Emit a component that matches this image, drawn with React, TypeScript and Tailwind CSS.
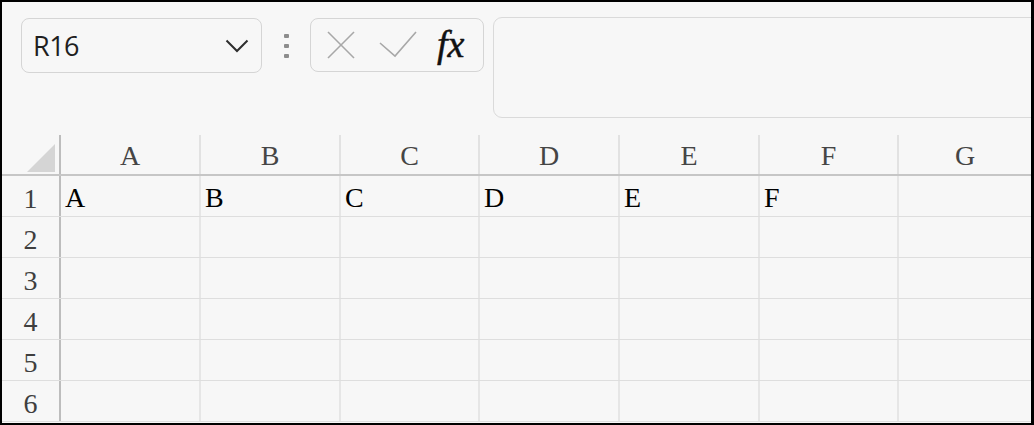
import React from "react";

const cols = [
  { l: "A", w: "w-[140px]", v: "A" },
  { l: "B", w: "w-[140px]", v: "B" },
  { l: "C", w: "w-[139px]", v: "C" },
  { l: "D", w: "w-[140px]", v: "D" },
  { l: "E", w: "w-[140px]", v: "E" },
  { l: "F", w: "w-[139px]", v: "F" },
  { l: "G", w: "flex-1", v: "" },
];

const serif = { fontFamily: '"Liberation Serif", "Times New Roman", serif' };

export default function App() {
  return (
    <div className="w-[1034px] h-[425px] box-border border-2 border-r-[3px] border-black bg-[#f7f7f7] overflow-hidden flex flex-col">
      {/* Toolbar */}
      <div className="h-[133px] shrink-0 flex items-start pl-[19px] pt-[15px]">
        <div
          className="mt-[1px] w-[241px] h-[55px] shrink-0 rounded-[8px] border border-[#d5d5d5] flex items-center justify-between pl-[11px] pr-[12px]"
          style={{ fontFamily: '"Open Sans", "Noto Sans", sans-serif' }}
        >
          <span className="text-[27px] text-[#1f1f1f] leading-none tracking-[-0.5px]">R16</span>
          <svg width="24" height="14" viewBox="0 0 24 14" className="mt-[1px]">
            <polyline points="1.5,1.5 12,12 22.5,1.5" fill="none" stroke="#2e2e2e" strokeWidth="2" />
          </svg>
        </div>
        <div className="w-[48px] h-[56px] shrink-0 flex flex-col items-center justify-center gap-[6px] pt-[1px]">
          <div className="w-[5px] h-[4px] bg-[#8d8d8d] rounded-[1px]" />
          <div className="w-[5px] h-[4px] bg-[#8d8d8d] rounded-[1px]" />
          <div className="w-[5px] h-[4px] bg-[#8d8d8d] rounded-[1px]" />
        </div>
        <div className="mt-[1px] w-[174px] h-[54px] shrink-0 rounded-[8px] border border-[#d5d5d5] flex items-center pl-[16px]">
          <svg width="28" height="28" viewBox="0 0 28 28">
            <line x1="1" y1="1" x2="27" y2="27" stroke="#a8a8a8" strokeWidth="1.6" />
            <line x1="27" y1="1" x2="1" y2="27" stroke="#a8a8a8" strokeWidth="1.6" />
          </svg>
          <svg width="38" height="28" viewBox="0 0 38 28" className="ml-[24px]">
            <polyline points="1,12 16,25 37,1" fill="none" stroke="#a8a8a8" strokeWidth="1.6" />
          </svg>
          <span
            className="ml-[20px] text-[38px] italic leading-none text-[#111] -mt-[2px] tracking-[0px] [-webkit-text-stroke:0.5px_#111]"
            style={{ fontFamily: '"Liberation Serif", "Times New Roman", serif' }}
          >
            fx
          </span>
        </div>
        <div className="ml-[9px] flex-1 -mr-[16px] h-[101px] rounded-[9px] border-[1.5px] border-[#dadada]" />
      </div>

      {/* Grid */}
      <div className="flex-1 flex flex-col" style={serif}>
        {/* Header row */}
        <div className="h-[41px] shrink-0 flex border-b-2 border-[#c6c6c6]">
          <div className="w-[59px] shrink-0 border-r-2 border-[#bdbdbd] flex items-center justify-end pr-[4px]">
            <svg width="28" height="28" viewBox="0 0 28 28" className="mt-[6px]">
              <polygon points="28,0 28,28 0,28" fill="#d5d5d5" />
            </svg>
          </div>
          {cols.map((c) => (
            <div
              key={c.l}
              className={`${c.w} shrink-0 border-r-2 border-[#e2e2e2] last:border-r-0 flex items-center justify-center text-[28px] text-[#454545] leading-none pt-[3px]`}
            >
              {c.l}
            </div>
          ))}
        </div>
        {[1, 2, 3, 4, 5, 6].map((r) => (
          <div key={r} className="h-[41px] shrink-0 flex border-b border-[#dedede]">
            <div className="w-[59px] shrink-0 border-r-2 border-[#bdbdbd] flex items-end justify-center pb-[3px] text-[28px] text-[#3f3f3f] leading-none">
              {r}
            </div>
            {cols.map((c) => (
              <div
                key={c.l}
                className={`${c.w} shrink-0 border-r-2 border-[#e6e6e6] last:border-r-0 flex items-end pl-[4px] pb-[4px] text-[28px] text-black leading-none`}
              >
                {r === 1 ? c.v : ""}
              </div>
            ))}
          </div>
        ))}
      </div>
    </div>
  );
}
